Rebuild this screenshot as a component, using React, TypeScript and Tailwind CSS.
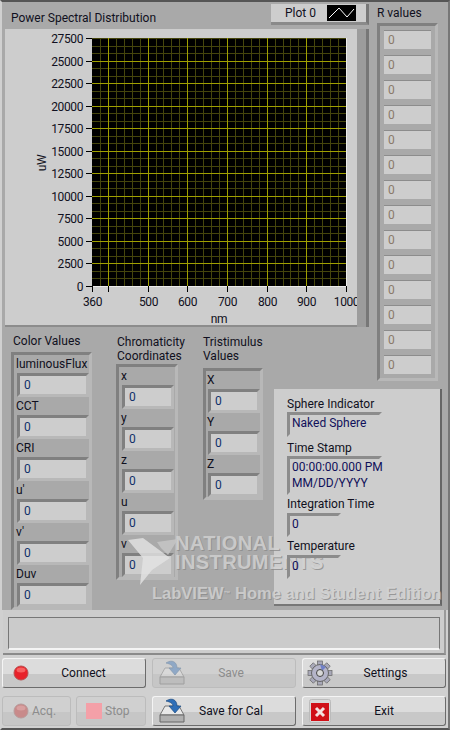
const FONT = "font-['Roboto',sans-serif]";

function Field({ value }: { value: string }) {
  return (
    <div className="h-6 w-full border-[3px] border-t-[#808080] border-l-[#808080] border-r-[#b8b8b8] border-b-[#b8b8b8] bg-[#cdcdcd] pl-1 text-[12px] leading-[18px] text-[#10306a]">
      {value}
    </div>
  );
}

function Numeric({ label }: { label: string }) {
  return (
    <div className="flex flex-col">
      <div className="-ml-px h-[18px] text-[12px] leading-[18px] whitespace-nowrap">{label}</div>
      <Field value="0" />
    </div>
  );
}

function Frame({ className, children }: { className: string; children: React.ReactNode }) {
  return (
    <div className={`border-[3px] border-t-[#808080] border-l-[#808080] border-r-[#b8b8b8] border-b-[#b8b8b8] ${className}`}>
      {children}
    </div>
  );
}

function Chart() {
  const x0 = 92;
  const y0 = 38;
  const plotW = 254;
  const plotH = 248;
  const xMajor = [400, 500, 600, 700, 800, 900, 1000];
  const xPos = (v: number) => Math.round(x0 + ((v - 360) / 640) * plotW) + 0.5;
  const yVals = Array.from({ length: 12 }, (_, i) => i * 2500);
  const yPos = (v: number) => Math.round(y0 + plotH - (v / 27500) * plotH) + 0.5;
  const xMinor: number[] = [];
  for (let v = 380; v < 1000; v += 20) xMinor.push(v);
  const yMinor: number[] = [];
  for (let v = 2500 / 3; v < 27500; v += 2500 / 3) yMinor.push(v);
  return (
    <svg width="352" height="296" viewBox="5 29 352 296" className="block overflow-visible" style={{ letterSpacing: '-0.4px' }}>
      <rect x={x0} y={y0} width={plotW} height={plotH} fill="#000" />
      <path d={`M${x0 + plotW + 0.5} ${y0} V${y0 + plotH + 0.5} H${x0}`} fill="none" stroke="#ececec" />
      {xMinor.map((v) => (
        <line key={v} x1={xPos(v)} x2={xPos(v)} y1={y0} y2={y0 + plotH} stroke="#45450c" />
      ))}
      {yMinor.map((v) => (
        <line key={v} y1={yPos(v)} y2={yPos(v)} x1={x0} x2={x0 + plotW} stroke="#45450c" />
      ))}
      {xMajor.slice(0, -1).map((v) => (
        <line key={v} x1={xPos(v)} x2={xPos(v)} y1={y0} y2={y0 + plotH} stroke="#a0a000" />
      ))}
      {yVals.slice(1, -1).map((v) => (
        <line key={v} y1={yPos(v)} y2={yPos(v)} x1={x0} x2={x0 + plotW} stroke="#a0a000" />
      ))}
      {yVals.map((v) => (
        <g key={v}>
          <line x1={x0 - 6} x2={x0} y1={yPos(v)} y2={yPos(v)} stroke="#000" />
          <text x={x0 - 9} y={yPos(v) + 4} textAnchor="end" fontSize="12" fill="#101020">{v}</text>
        </g>
      ))}
      {[360, ...xMajor].map((v) => (
        <g key={v}>
          <line x1={xPos(v)} x2={xPos(v)} y1={y0 + plotH} y2={y0 + plotH + 6} stroke="#000" />
          {v !== 400 && <text x={xPos(v)} y={y0 + plotH + 20} textAnchor="middle" fontSize="12" fill="#101020">{v}</text>}
        </g>
      ))}
      <text x="219" y="323" textAnchor="middle" fontSize="12" fill="#101020">nm</text>
      <text transform="translate(46 163) rotate(-90)" textAnchor="middle" fontSize="12" fill="#101020">uW</text>
    </svg>
  );
}

function Btn({ className, label, icon, disabled, labelClass = '' }: { className: string; label: string; icon?: React.ReactNode; disabled?: boolean; labelClass?: string }) {
  return (
    <div
      className={`flex h-[30px] items-center rounded-[3px] border text-[12px] ${className} ${
        disabled
          ? 'border-[#bcbcbc] bg-[linear-gradient(#d0d0d0_0%,#d0d0d0_55%,#c6c6c6_55%,#c6c6c6_100%)] text-[#8c8c8c]'
          : 'border-t-[#f4f4f4] border-l-[#f4f4f4] border-r-[#6c6c6c] border-b-[#6c6c6c] bg-[linear-gradient(#dcdcdc_0%,#dcdcdc_55%,#c8c8c8_55%,#c8c8c8_100%)] text-[#101020]'
      }`}
    >
      {icon}
      <span className={labelClass}>{label}</span>
    </div>
  );
}

function Led({ dim }: { dim?: boolean }) {
  return (
    <svg width="16" height="16" viewBox="0 0 16 16" className="ml-[10px] shrink-0">
      <circle cx="8" cy="8" r="7" fill={dim ? '#c88a8a' : '#e8222a'} stroke={dim ? '#b89a9a' : '#b85050'} />
      <ellipse cx="8" cy="5" rx="4.5" ry="2.5" fill={dim ? '#d8a0a0' : '#f86060'} />
    </svg>
  );
}

function SaveIcon({ dim }: { dim?: boolean }) {
  return (
    <svg width="26" height="26" viewBox="0 0 26 26" className={`ml-[6px] shrink-0 ${dim ? 'opacity-40' : ''}`}>
      <path d="M6 8 L20 8 L25 17 L1 17 Z" fill="#e8e8e8" stroke="#777" />
      <path d="M1 17 H25 V24 H1 Z" fill="#b0b0b0" stroke="#666" />
      <path d="M7 3 C13 -1 18 2 18 8 H22 L16 15 L10 8 H14 C14 6 12 4 7 3 Z" fill="#2f6fb8" stroke="#1d4a80" strokeWidth="0.7" />
    </svg>
  );
}

function GearIcon() {
  const teeth = Array.from({ length: 8 }, (_, i) => i * 45);
  return (
    <svg width="26" height="26" viewBox="0 0 26 26" className="ml-[4px] shrink-0">
      {teeth.map((a) => (
        <rect key={a} x="10.5" y="1" width="5" height="6" fill="#a8a8b8" stroke="#666" strokeWidth="0.7" transform={`rotate(${a} 13 13)`} />
      ))}
      <circle cx="13" cy="13" r="8.5" fill="#b4b4c8" stroke="#666" />
      <path d="M13 4 L19 7 L15 11 Z" fill="#7080c8" />
      <circle cx="13" cy="13" r="3.5" fill="#d8d8d8" stroke="#444" />
    </svg>
  );
}

function ExitIcon() {
  return (
    <svg width="22" height="24" viewBox="0 0 22 24" className="ml-[6px] shrink-0">
      <rect x="0.5" y="0.5" width="21" height="23" rx="2" fill="#d8d8d8" stroke="#bbb" />
      <rect x="2" y="4" width="18" height="18" fill="#d01018" />
      <path d="M7 9 L15 17 M15 9 L7 17" stroke="#f4e0e0" strokeWidth="3" />
    </svg>
  );
}

function Indicator({ h, text, w = 'w-[95px]', className = '' }: { h: string; text: string; w?: string; className?: string }) {
  return (
    <div className={`${h} ${w} ${className} whitespace-pre border-[3px] border-t-[#8c8c8c] border-l-[#8c8c8c] border-r-transparent border-b-transparent pl-[2px] text-[12px] leading-[16px] text-[#10105a]`}>
      {text}
    </div>
  );
}

export default function App() {
  return (
    <div className={`relative flex h-[730px] w-[450px] flex-col overflow-hidden border-t-2 border-r-2 border-b-2 border-l-2 border-t-[#555] border-r-[#777] border-b-[#555] border-l-[#d0d0d0] bg-[#a9a9a9] text-[#101020] ${FONT}`}>
      <div className="grid h-[608px] shrink-0 grid-cols-[272px_102px_1fr] grid-rows-[325px_60px_223px]">
        {/* graph */}
        <div className="col-span-2">
          <div className="flex h-[27px] w-[367px] items-start justify-between pl-[9px]">
            <span className="pt-[8px] text-[12px] leading-[16px]">Power Spectral Distribution</span>
            <div className="mt-[2px] flex h-[21px] w-[98px] items-center justify-end border-r-[3px] border-b-[3px] border-r-[#777] border-b-[#8a8a8a] bg-[#cdcdcd] pr-[10px]">
              <span className="mr-[11px] text-[12px]">Plot 0</span>
              <svg width="29" height="16" viewBox="0 0 29 16" className="shrink-0">
                <rect width="29" height="16" fill="#000" />
                <path d="M2 13 L12 3 L20 12 L27 4" fill="none" stroke="#fff" />
              </svg>
            </div>
          </div>
          <div className="ml-[3px] flex h-[298px] w-[364px]">
            <div className="border-b-2 border-b-[#8c8c8c] bg-[#cdcdcd]"><Chart /></div>
            <div className="w-[12px] border-r-[3px] border-r-[#777] bg-[#9c9c9c]" />
          </div>
        </div>

        {/* r values */}
        <div className="row-span-2">
          <div className="h-[21px] pt-[3px] pl-[1px] text-[12px] leading-[16px]">R values</div>
          <Frame className="ml-[1px] flex h-[358px] w-[61px] flex-col gap-[6px] px-[4px] pt-[4px]">
            {Array.from({ length: 14 }, (_, i) => (
              <div key={i} className="h-[19px] w-[47px] border-t border-t-[#8c8c8c] bg-[#cdcdcd] pl-[4px] text-[12px] leading-[18px] text-[#8a7a6a]">0</div>
            ))}
          </Frame>
        </div>

        {/* clusters */}
        <div className="row-span-2 flex pt-[6px] pl-[9px]">
          <div className="w-[105px] shrink-0">
            <div className="h-[19px] pl-[2px] text-[12px] leading-[16px]">Color Values</div>
            <Frame className="w-[81px] pl-[3px]">
              {['luminousFlux', 'CCT', 'CRI', "u'", "v'", 'Duv'].map((l) => <Numeric key={l} label={l} />)}
            </Frame>
          </div>
          <div className="mt-[2px] w-[87px] shrink-0">
            <div className="pl-[1px] text-[12px] leading-[14px]">Chromaticity<br />Coordinates</div>
            <Frame className="mt-[1px] w-[62px] pr-[1px] pl-[3px]">
              {['x', 'y', 'z', 'u', 'v'].map((l) => <Numeric key={l} label={l} />)}
            </Frame>
          </div>
          <div className="mt-[2px] shrink-0">
            <div className="text-[12px] leading-[14px] whitespace-nowrap">Tristimulus<br />Values</div>
            <Frame className="mt-[5px] w-[60px] pl-[2px]">
              {['X', 'Y', 'Z'].map((l) => <Numeric key={l} label={l} />)}
            </Frame>
          </div>
        </div>

        {/* info panel */}
        <div className="col-span-2 pt-[2px]">
          <div className="flex h-[217px] w-[168px] flex-col border-r-[2px] border-b-[2px] border-r-[#666] border-b-[#777] bg-[#cdcdcd] pt-[7px] pl-[13px]">
            <div className="h-[16px] text-[12px] leading-[16px]">Sphere Indicator</div>
            <Indicator h="h-[25px]" text="Naked Sphere" />
            <div className="mt-[1px] h-[18px] text-[12px] leading-[20px]">Time Stamp</div>
            <Indicator h="h-[39px]" text={'00:00:00.000 PM\nMM/DD/YYYY'} />
            <div className="h-[18px] text-[12px] leading-[18px]">Integration Time</div>
            <Indicator h="h-[24px]" text="0" w="w-[54px]" />
            <div className="relative z-10 h-[18px] text-[12px] leading-[18px]">Temperature</div>
            <Indicator h="h-[24px]" text="0" w="w-[54px]" className="relative z-10" />
          </div>
        </div>
      </div>

      {/* status bar */}
      <div className="h-[45px] shrink-0 bg-[#d0d0d0]">
        <div className="ml-px h-[45px] w-[443px] border-r-2 border-r-[#9a9a9a] border-b-2 border-b-[#8a8a8a] bg-[#cdcdcd] pt-[7px] pr-[4px] pl-[5px]">
          <div className="h-[33px] border border-b-2 border-t-[#777] border-r-[#777] border-b-[#f4f4f4] border-l-[#777] bg-[#cbcbcb]" />
        </div>
      </div>

      {/* buttons */}
      <div className="flex flex-1 flex-col gap-[8px] bg-[#d0d0d0] pt-[3px]">
        <div className="flex gap-[6px]">
          <Btn className="w-[144px]" label="Connect" icon={<Led />} labelClass="flex-1 pr-[7px] text-center" />
          <Btn className="w-[144px]" label="Save" icon={<SaveIcon dim />} disabled labelClass="flex-1 pr-[18px] text-center" />
          <Btn className="w-[144px]" label="Settings" icon={<GearIcon />} labelClass="flex-1 pr-[7px] text-center" />
        </div>
        <div className="flex gap-[6px]">
          <div className="flex w-[144px] gap-[5px]">
            <Btn className="w-[69px]" label="Acq." icon={<Led dim />} disabled labelClass="ml-[3px]" />
            <Btn className="w-[70px]" label="Stop" disabled labelClass="ml-[3px]" icon={<span className="ml-[9px] h-4 w-4 bg-[#f4a0a8]" />} />
          </div>
          <Btn className="w-[144px]" label="Save for Cal" icon={<SaveIcon />} labelClass="flex-1 pr-[18px] text-center" />
          <Btn className="w-[144px]" label="Exit" icon={<ExitIcon />} labelClass="flex-1 pr-[8px] text-center" />
        </div>
      </div>

      {/* LabVIEW watermark */}
      <div className="pointer-events-none absolute top-[532px] left-[126px] font-['Liberation_Sans',sans-serif] font-bold text-[#d2d2d2] opacity-80 [text-shadow:1px_1px_0_#8c8c8c]">
        <svg width="52" height="54" viewBox="0 0 52 54" className="absolute top-0 left-0">
          <path d="M0 6 L15 4 L42 24 L24 36 L12 51 L15 24 Z" fill="#e4e4e4" />
          <path d="M29 8 L50 5 L40 21 L33 14 Z" fill="#c8c8c8" />
        </svg>
        <div className="ml-[47px] w-[280px] text-[20px] leading-[19px] tracking-[0.4px]">NATIONAL<br />INSTRUMENTS</div>
        <div className="mt-[12px] ml-[24px] text-[16.5px] leading-[18px] whitespace-nowrap">LabVIEW<sup className="text-[7px]">™</sup> Home and Student Edition</div>
      </div>
    </div>
  );
}
